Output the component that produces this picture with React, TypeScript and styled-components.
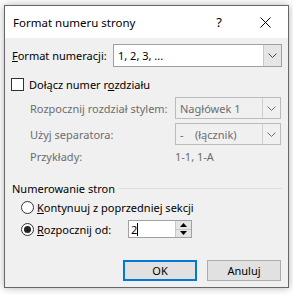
import styled, { createGlobalStyle } from "styled-components";

const Global = createGlobalStyle`
  html, body {
    margin: 0;
    padding: 0;
    background: #ffffff;
  }
  body {
    font-family: "Noto Sans", "Open Sans", sans-serif;
    font-size: 11px;
    color: #000;
    white-space: nowrap;
  }
`;

export default function App() {
  return (
    <>
      <Global />
      <Page>
        <Dialog>
          <TitleBar>
            <Title>Format numeru strony</Title>
            <TitleBtn>?</TitleBtn>
            <TitleBtn>
              <svg width="11" height="11" viewBox="0 0 11 11">
                <path d="M0.5 0.5 L10.5 10.5 M10.5 0.5 L0.5 10.5" stroke="#000" strokeWidth="1" />
              </svg>
            </TitleBtn>
          </TitleBar>
          <Body>
            <FormatRow>
              <span>
                <u>F</u>ormat numeracji:
              </span>
              <Combo $w={169} $h={23}>
                <ComboText>1, 2, 3, ...</ComboText>
                <Arrow />
              </Combo>
            </FormatRow>

            <CheckRow>
              <CheckBox />
              <span>
                Dołącz numer r<u>o</u>zdziału
              </span>
            </CheckRow>

            <SubGrid>
              <Muted>Rozpocznij rozdział stylem:</Muted>
              <Combo $w={106} $h={22} $disabled>
                <ComboText $muted>Nagłówek 1</ComboText>
                <Arrow $disabled />
              </Combo>
              <Muted>Użyj separatora:</Muted>
              <Combo $w={106} $h={22} $disabled>
                <ComboText $muted>
                  -&nbsp;&nbsp;&nbsp;&nbsp;(łącznik)
                </ComboText>
                <Arrow $disabled />
              </Combo>
              <Muted>Przykłady:</Muted>
              <Muted>1-1, 1-A</Muted>
            </SubGrid>

            <GroupHead>
              <span>Numerowanie stron</span>
              <GroupLine />
            </GroupHead>

            <RadioRow $top={5} $h={14}>
              <Radio />
              <span>
                <u>K</u>ontynuuj z poprzedniej sekcji
              </span>
            </RadioRow>
            <RadioRow $top={6} $h={18}>
              <Radio $on />
              <RadioLabel>
                <u>R</u>ozpocznij od:
              </RadioLabel>
              <Spin>
                <SpinText>
                  2<Caret />
                </SpinText>
                <SpinBtns>
                  <SpinBtn>
                    <svg width="7" height="4" viewBox="0 0 7 4">
                      <path d="M0 4 L3.5 0 L7 4 Z" fill="#000" />
                    </svg>
                  </SpinBtn>
                  <SpinBtn>
                    <svg width="7" height="4" viewBox="0 0 7 4">
                      <path d="M0 0 L3.5 4 L7 0 Z" fill="#000" />
                    </svg>
                  </SpinBtn>
                </SpinBtns>
              </Spin>
            </RadioRow>

            <Buttons>
              <Button $primary>OK</Button>
              <Button>Anuluj</Button>
            </Buttons>
          </Body>
        </Dialog>
      </Page>
    </>
  );
}

function Arrow({ $disabled }: { $disabled?: boolean }) {
  return (
    <ArrowBox $disabled={$disabled}>
      <svg width="9" height="5" viewBox="0 0 9 5">
        <path d="M0.5 0.5 L4.5 4.5 L8.5 0.5" fill="none" stroke={$disabled ? "#6d6d6d" : "#444"} strokeWidth="1" />
      </svg>
    </ArrowBox>
  );
}

const Page = styled.div`
  width: 293px;
  height: 295px;
  padding: 5px 0 0 4px;
  box-sizing: border-box;
`;

const Dialog = styled.div`
  width: 285px;
  height: 283px;
  box-sizing: border-box;
  border: 1px solid #666;
  background: #f0f0f0;
  box-shadow: 0 0 8px rgba(0, 0, 0, 0.3);
  display: flex;
  flex-direction: column;
`;

const TitleBar = styled.div`
  height: 32px;
  flex: none;
  background: #fff;
  display: flex;
  align-items: center;
  padding-left: 8px;
`;

const Title = styled.div`
  flex: 1;
  font-size: 11.5px;
`;

const TitleBtn = styled.div`
  width: 46px;
  height: 32px;
  display: flex;
  align-items: center;
  justify-content: center;
  font-size: 13px;
`;

const Body = styled.div`
  flex: 1;
  padding: 6px 6px 0 7px;
  display: flex;
  flex-direction: column;
`;

const FormatRow = styled.div`
  display: flex;
  align-items: center;
  justify-content: space-between;
  height: 23px;
`;

const Combo = styled.div<{ $w: number; $h: number; $disabled?: boolean }>`
  width: ${(p) => p.$w}px;
  height: ${(p) => p.$h}px;
  box-sizing: border-box;
  border: 1px solid ${(p) => (p.$disabled ? "#bcbcbc" : "#a0a0a0")};
  background: ${(p) => (p.$disabled ? "#f0f0f0" : "#fff")};
  display: flex;
  align-items: stretch;
`;

const ComboText = styled.div<{ $muted?: boolean }>`
  flex: 1;
  display: flex;
  align-items: center;
  padding-left: 4px;
  color: ${(p) => (p.$muted ? "#6d6d6d" : "#000")};
`;

const ArrowBox = styled.div<{ $disabled?: boolean }>`
  width: 17px;
  border-left: 1px solid ${(p) => (p.$disabled ? "#cfcfcf" : "#c8c8c8")};
  background: ${(p) => (p.$disabled ? "#f0f0f0" : "#e5e5e5")};
  display: flex;
  align-items: center;
  justify-content: center;
`;

const CheckRow = styled.div`
  display: flex;
  align-items: center;
  gap: 5px;
  height: 13px;
  margin-top: 11px;
  margin-left: -1px;
`;

const CheckBox = styled.div`
  width: 13px;
  height: 13px;
  box-sizing: border-box;
  border: 1px solid #333;
  background: #fff;
`;

const SubGrid = styled.div`
  display: grid;
  grid-template-columns: 145px 106px;
  grid-template-rows: 22px 22px 14px;
  row-gap: 4px;
  align-items: center;
  padding-left: 18px;
  margin-top: 6px;
`;

const Muted = styled.span`
  color: #6d6d6d;
`;

const GroupHead = styled.div`
  display: flex;
  align-items: center;
  gap: 4px;
  height: 14px;
  margin-top: 18px;
`;

const GroupLine = styled.div`
  flex: 1;
  height: 1px;
  background: #dcdcdc;
`;

const RadioRow = styled.div<{ $top: number; $h: number }>`
  display: flex;
  align-items: center;
  gap: 3px;
  padding-left: 9px;
  height: ${(p) => p.$h}px;
  margin-top: ${(p) => p.$top}px;
`;

const Radio = styled.div<{ $on?: boolean }>`
  width: 13px;
  height: 13px;
  box-sizing: border-box;
  border: 1px solid #333;
  border-radius: 50%;
  background: #fff;
  position: relative;
  &::after {
    content: "";
    display: ${(p) => (p.$on ? "block" : "none")};
    position: absolute;
    left: 2px;
    top: 2px;
    width: 7px;
    height: 7px;
    border-radius: 50%;
    background: #222;
  }
`;

const RadioLabel = styled.span`
  width: 88px;
`;

const Spin = styled.div`
  width: 64px;
  height: 18px;
  box-sizing: border-box;
  border: 1px solid #a0a0a0;
  background: #fff;
  display: flex;
`;

const SpinText = styled.div`
  flex: 1;
  display: flex;
  align-items: center;
  padding-left: 2px;
`;

const Caret = styled.span`
  display: inline-block;
  width: 1px;
  height: 13px;
  background: #000;
`;

const SpinBtns = styled.div`
  width: 15px;
  display: flex;
  flex-direction: column;
  border-left: 1px solid #c8c8c8;
`;

const SpinBtn = styled.div`
  flex: 1;
  background: #e5e5e5;
  display: flex;
  align-items: center;
  justify-content: center;
  &:first-child {
    border-bottom: 1px solid #c8c8c8;
  }
`;

const Buttons = styled.div`
  display: flex;
  justify-content: flex-end;
  gap: 10px;
  margin-top: 22px;
  padding-right: 1px;
`;

const Button = styled.div<{ $primary?: boolean }>`
  width: 74px;
  height: 21px;
  box-sizing: border-box;
  border: ${(p) => (p.$primary ? "2px solid #0078d7" : "1px solid #adadad")};
  background: #e1e1e1;
  display: flex;
  align-items: center;
  justify-content: center;
`;
